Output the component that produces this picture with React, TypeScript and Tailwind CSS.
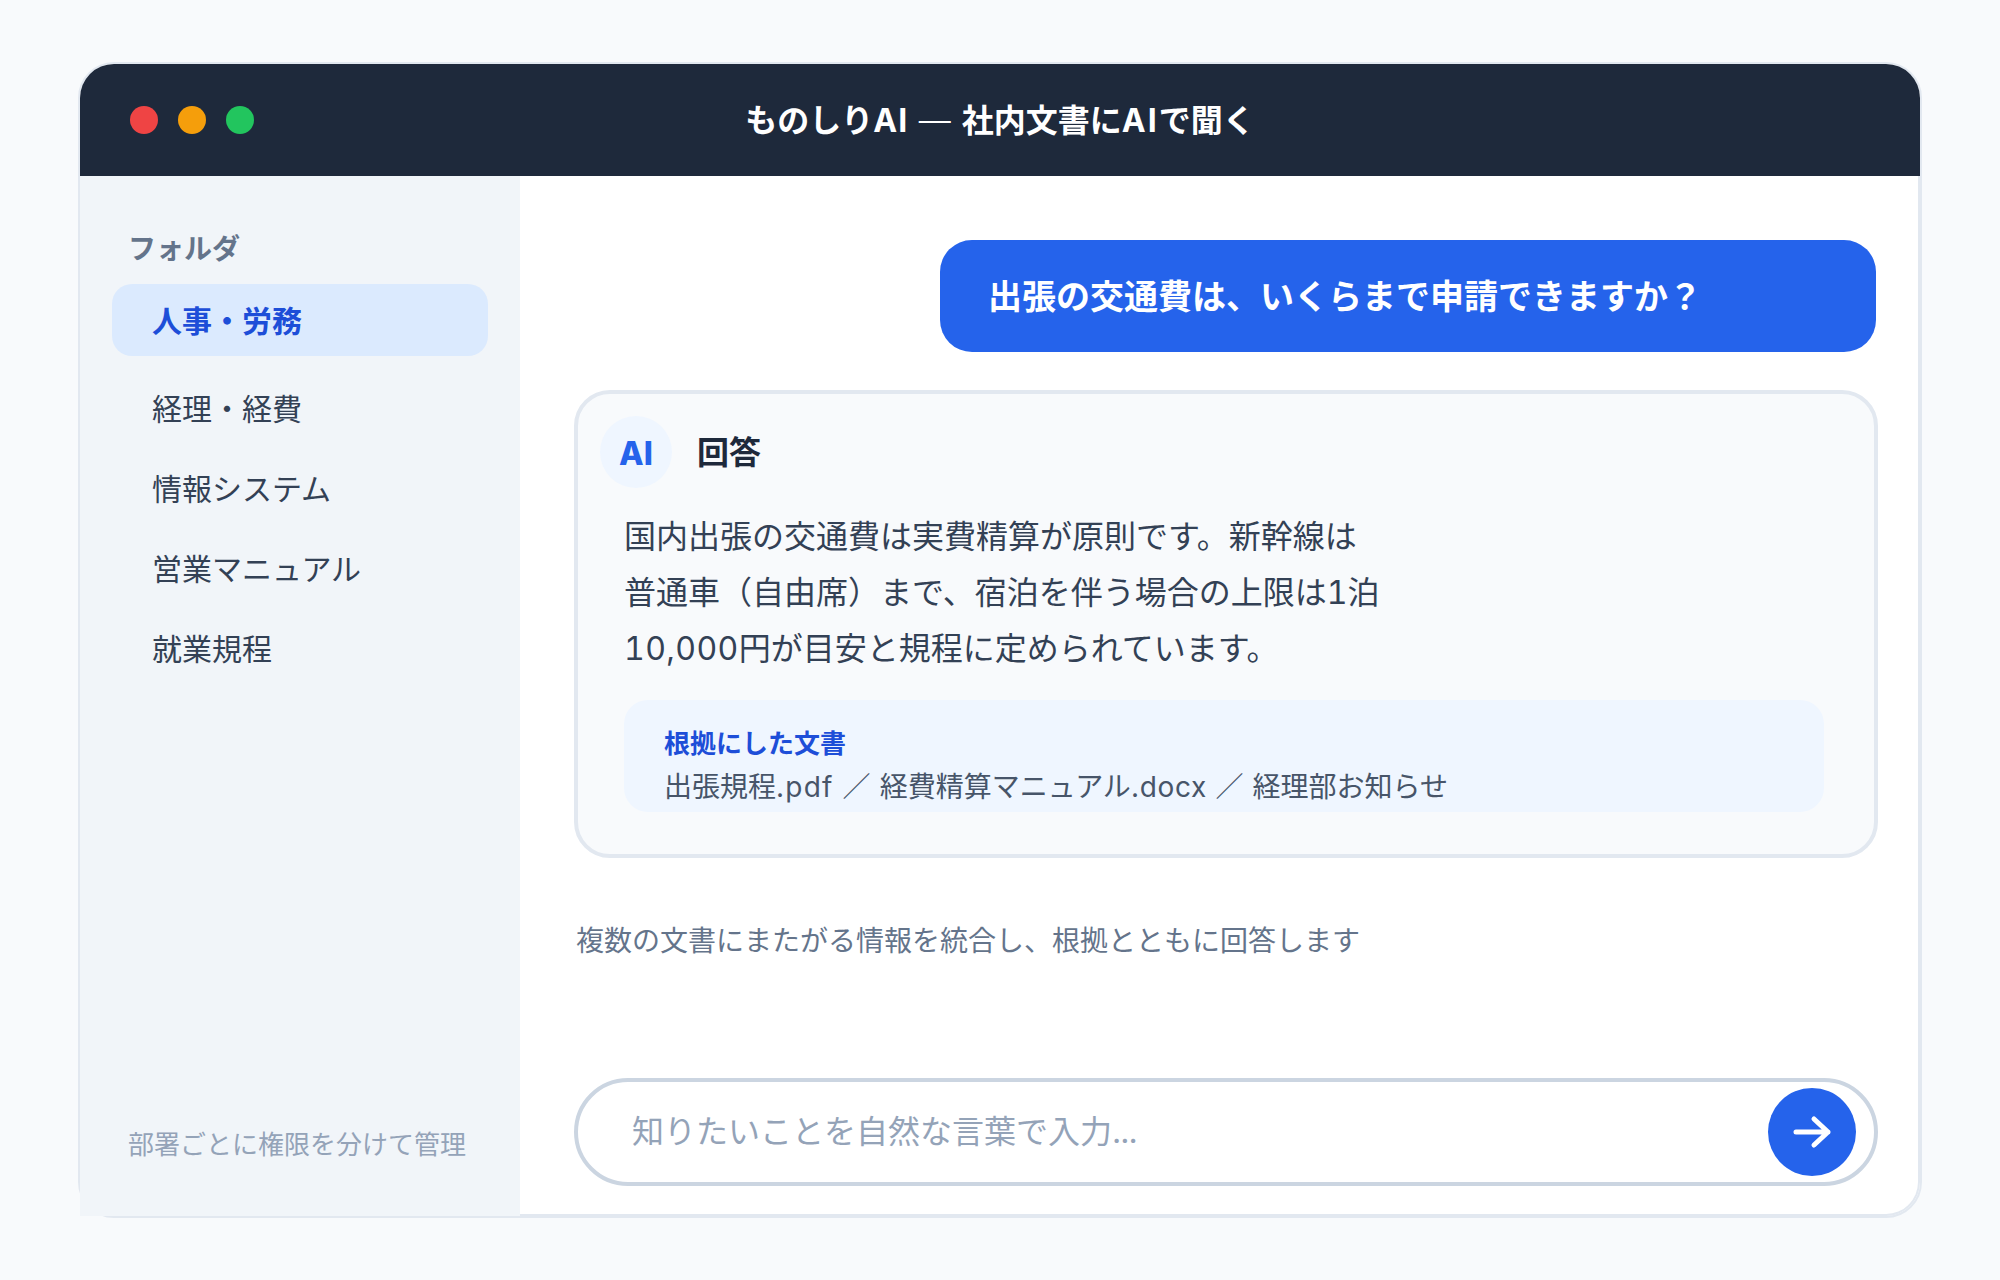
export default function App() {
  const items = ["経理・経費", "情報システム", "営業マニュアル", "就業規程"];
  return (
    <div className="min-h-screen bg-[#f8fafc] flex items-center justify-center font-['Inter','Noto_Sans_CJK_JP',sans-serif]">
      <div className="w-[1844px] h-[1156px] bg-white border-2 border-[#e2e8f0] rounded-[36px] flex flex-col">
        <header className="h-[112px] shrink-0 bg-[#1e293b] rounded-t-[34px] grid grid-cols-[1fr_auto_1fr] items-center">
          <div className="flex gap-[20px] pl-[50px]">
            <span className="w-[28px] h-[28px] rounded-full bg-[#ef4444]" />
            <span className="w-[28px] h-[28px] rounded-full bg-[#f59e0b]" />
            <span className="w-[28px] h-[28px] rounded-full bg-[#22c55e]" />
          </div>
          <div className="text-white text-[32px] font-bold leading-none pt-[1px]">
            ものしり<span className="tracking-[1px]">AI</span><span className="tracking-[3px]"> </span><span className="font-light">—</span><span className="tracking-[3.5px]"> </span>社内文書に<span className="tracking-[2px]">AI</span>で聞く
          </div>
          <div />
        </header>
        <div className="flex flex-1 min-h-0">
          <aside className="w-[440px] shrink-0 bg-[#f1f5f9] flex flex-col pt-[54px] pb-[55px] px-[32px]">
            <div className="pl-[16px] mt-[1px] text-[28px] font-bold leading-[36px] text-[#64748b]">フォルダ</div>
            <div className="mt-[17px] h-[72px] pt-[2px] rounded-[20px] bg-[#dbeafe] pl-[40px] flex items-center text-[30px] font-bold text-[#1d4ed8]">人事・労務</div>
            <div className="mt-[17px] flex flex-col gap-[8px]">
              {items.map((t) => (
                <div key={t} className="h-[72px] pt-[1px] pl-[40px] flex items-center text-[30px] text-[#334155]">{t}</div>
              ))}
            </div>
            <div className="mt-auto pl-[16px] text-[26px] leading-[32px] text-[#94a3b8]">部署ごとに権限を分けて管理</div>
          </aside>
          <main className="flex-1 min-w-0 bg-white border-r-2 border-b-2 border-[#e2e8f0] rounded-br-[34px] flex flex-col pt-[64px] pl-[54px] pr-[40px] pb-[28px]">
            <div className="self-end mr-[2px] w-[936px] h-[112px] rounded-[32px] bg-[#2563eb] pl-[48px] flex items-center text-[34px] font-semibold text-white">出張の交通費は、いくらまで申請できますか？</div>
            <section className="mt-[38px] h-[468px] rounded-[36px] border-4 border-[#e2e8f0] bg-[#f8fafc] pt-[22px] pl-[22px] pr-[50px]">
              <div className="flex items-center gap-[25px]">
                <div className="w-[72px] h-[72px] pt-[3px] rounded-full bg-[#eff6ff] flex items-center justify-center text-[32px] font-extrabold text-[#2563eb]">AI</div>
                <div className="pt-[2px] text-[32px] font-bold text-[#1e293b]">回答</div>
              </div>
              <div className="ml-[24px] mt-[21px] text-[32px] leading-[56px] text-[#334155]">
                <p>国内出張の交通費は実費精算が原則です。新幹線は</p>
                <p>普通車（自由席）まで、宿泊を伴う場合の上限は<span className="tabular-nums">1</span>泊</p>
                <p><span className="tabular-nums tracking-[0.4px]">10,000</span>円が目安と規程に定められています。</p>
              </div>
              <div className="ml-[24px] mt-[23px] h-[112px] rounded-[24px] bg-[#eff6ff] pl-[40px] pt-[24px]">
                <div className="text-[26px] leading-[40px] font-bold text-[#1d4ed8]">根拠にした文書</div>
                <div className="pt-[1px] text-[28px] leading-[44px] text-[#475569]">
                  出張規程<span className="tracking-[1.2px]">.pdf </span>／<span className="tracking-[1.2px]"> </span>経費精算マニュアル<span className="tracking-[0.7px]">.docx </span>／<span className="tracking-[1px]"> </span>経理部お知らせ
                </div>
              </div>
            </section>
            <p className="mt-[65px] pl-[2px] text-[28px] leading-[36px] text-[#64748b]">複数の文書にまたがる情報を統合し、根拠とともに回答します</p>
            <div className="mt-auto h-[108px] rounded-full border-4 border-[#cbd5e1] bg-white flex items-center pl-[54px] pr-[18px]">
              <span className="flex-1 text-[32px] text-[#94a3b8]">知りたいことを自然な言葉で入力<span className="tracking-[-1px]">...</span></span>
              <button className="w-[88px] h-[88px] rounded-full bg-[#2563eb] flex items-center justify-center">
                <svg width="44" height="40" viewBox="0 0 44 40" fill="none" stroke="white" strokeWidth="5" strokeLinecap="round" strokeLinejoin="round">
                  <path d="M6 20h32M24 7l14 13-14 13" />
                </svg>
              </button>
            </div>
          </main>
        </div>
      </div>
    </div>
  );
}
